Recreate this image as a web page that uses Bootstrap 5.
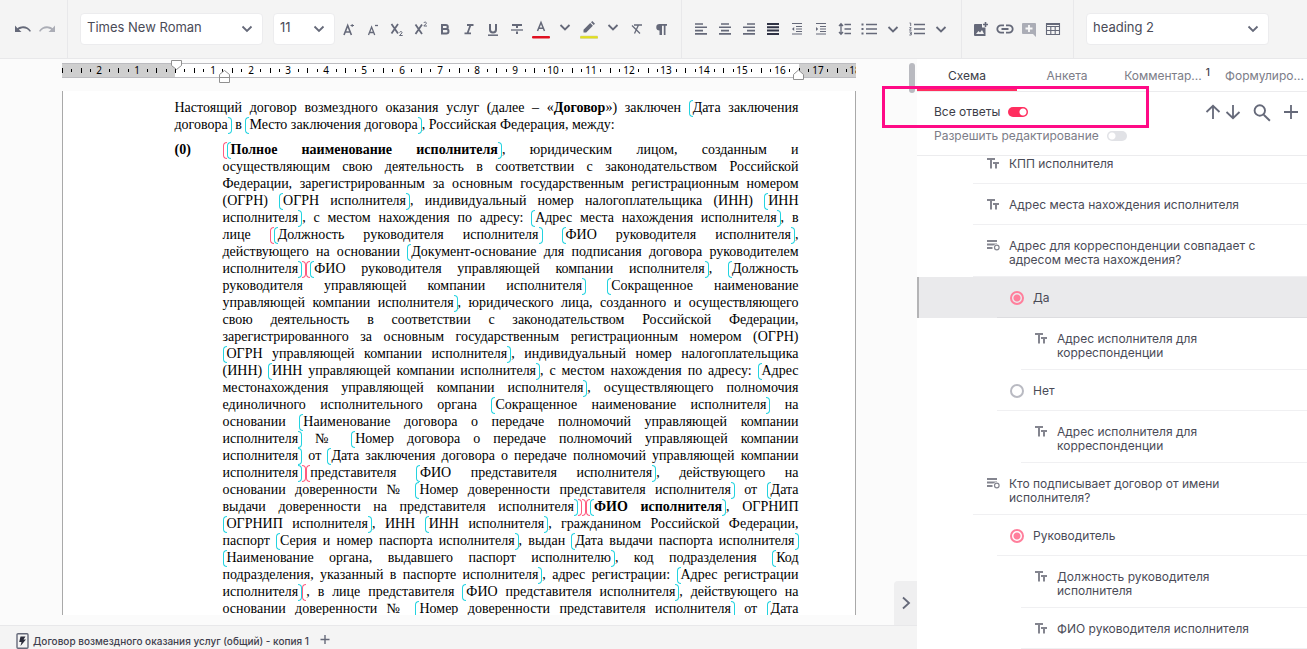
<!DOCTYPE html>
<html lang="ru">
<head>
<meta charset="utf-8">
<meta name="viewport" content="width=device-width, initial-scale=1">
<title>Договор возмездного оказания услуг</title>
<link href="https://cdn.jsdelivr.net/npm/bootstrap@5.3.0/dist/css/bootstrap.min.css" rel="stylesheet">
<style>
  body { font-family: Inter, "Noto Sans", sans-serif; font-size: 12px; color: #4a4b57; background: #fbfbfb; }
  button { border: 0; background: none; padding: 0; color: inherit; }
  svg { display: block; }

  /* toolbar */
  .toolbar { height: 59px; background: #f4f4f4; border-bottom: 1px solid #e8e8ea; padding-left: 3px; color: #656979; }
  .tool-group { padding: 0 8px; border-right: 1px solid #e8e8ea; }
  .tool-group + .tool-group { padding-left: 7px; }
  .tool-group.lists { padding-left: 12px; }
  .tool-group:last-child { border: 0; }
  .tool { width: 24px; height: 32px; display: flex; align-items: center; justify-content: center; }
  .tool:disabled { opacity: .5; }
  .pick { height: 32px; padding: 0 24px 2px 6px; font-size: 13px; color: #4a4b57; border: 1px solid #ececee; border-radius: 4px;
    background: #fff url("data:image/svg+xml,%3Csvg xmlns='http://www.w3.org/2000/svg' viewBox='0 0 12 8'%3E%3Cpath d='M1.5 1.5 6 6l4.5-4.5' fill='none' stroke='%23656979' stroke-width='1.8'/%3E%3C/svg%3E") no-repeat right 9px center / 12px 8px; }
  .pick-font { width: 183px; margin-right: 10px; }
  .pick-size { width: 62px; margin-right: 2px; }

  /* document */
  .editor { min-width: 0; }
  .doc-column { width: 794px; }
  .sheet { margin: 8px 0 10px; padding: 8px 56px 0 112px; border: solid #a9a9a9; border-width: 0 1px; background: #fff; color: #000;
    font: 14px/17px "Liberation Serif", "Times New Roman", serif; overflow: hidden; }
  .intro { text-align: justify; }
  .clause { margin-top: 8px; }
  .clause-no { width: 48px; flex: none; }
  .clause-text { min-width: 0; text-align: justify; text-align-last: justify; white-space: nowrap; }
  .fld::before, .fld::after, .cond::before, .cond.done::after { content: ""; display: inline-block; width: 4px; height: 17px; margin: -1px 0; vertical-align: -4px; border: 1px solid #22d3e0; }
  .fld::before, .cond::before { border-right: 0; border-radius: 4px 0 0 4px; }
  .fld::after, .cond.done::after { border-left: 0; border-radius: 0 4px 4px 0; }
  .cond::before, .cond.done::after { border-color: #ff5c80; }
  .doc-thumb { position: absolute; right: 2px; top: 4px; width: 6px; height: 30px; border-radius: 3px; background: #b9bac0; }
  .fold { position: absolute; right: 0; bottom: 0; width: 23px; height: 44px; background: #efeff0; border-radius: 4px 0 0 0; color: #656979; }
  .doc-tabs { height: 24px; border-top: 1px solid #e8e8ea; background: #f4f4f4; padding: 7px 0 0 16px; font-size: 10px; line-height: 16px; }
  .doc-tabs a { color: #3f404d; text-decoration: none; font-weight: 500; }

  /* side panel */
  .side { flex: 0 0 390px; min-width: 0; background: #fff; }
  .side-tabs { height: 33px; border-bottom: 1px solid #ececee; overflow: hidden; }
  .side-tabs button { flex: 0 0 100px; padding: 2px 0 0; color: #7c7d88; white-space: nowrap; }
  .side-tabs .active { color: #3c3d48; border-bottom: 3px solid #ff2e5f; padding-top: 4px; }
  .side-tabs sup { font-size: 10px; color: #3c3d48; top: -4px; margin-left: 4px; font-weight: 500; }
  .filters { height: 64px; padding: 8px 8px 0 17px; border-bottom: 1px solid #ececee; line-height: 24px; color: #7c7d88; }
  .filters .strong-label { color: #3c3d48; }
  .toggle { appearance: none; width: 20px; height: 10px; margin: 0 0 0 8px; border-radius: 5px;
    background: #e1e2e6 radial-gradient(circle at 5px 5px, #fff 3px, transparent 4px); }
  .toggle:checked { background: #ff2e5f radial-gradient(circle at 15px 5px, #fff 3px, transparent 4px); }
  .side-actions { color: #656979; }
  .callout { position: absolute; left: -35px; top: 27px; width: 267px; height: 42px; border: 3px solid #ff0a86; pointer-events: none; }

  .tree { flex: 1 1 0; min-height: 0; overflow: hidden; line-height: 14px; }
  .tree ul { margin: -13px 0 0; }
  .node { min-height: 41px; margin-left: 56px; padding: 14px 40px 9px 13px; border-bottom: 1px solid #f0f0f2; display: flex; }
  .node.l1 { margin-left: 80px; }
  .node.l2 { margin-left: 104px; }
  .node svg { flex: none; width: 14px; height: 14px; margin-right: 9px; color: #84858f; }
  .current { background: #eaeaec; box-shadow: inset 2px 0 #b4b4b6; }
  .current .node { border-color: #dddde0; }
  .choice { appearance: none; flex: none; width: 14px; height: 14px; margin: 0 9px 0 0; border: 2px solid #b9bac2; border-radius: 50%; }
  .choice:checked { border-color: #ff7f9c; background: radial-gradient(circle, #ff7f9c 3px, transparent 4px); }
</style>
</head>
<body class="vh-100 d-flex flex-column overflow-hidden">

<header class="toolbar d-flex flex-shrink-0">
  <div class="tool-group d-flex align-items-center">
    <button class="tool" aria-label="Отменить"><svg width="18" height="10" viewBox="0 0 18 10"><path d="M1 1.500V8h6.500L4.900 5.600C7.500 3.500 13 3.200 15.800 7.800L17 7C14 1.600 7.500 1 3.500 4.200Z" fill="currentColor"/></svg></button>
    <button class="tool" aria-label="Повторить" disabled><svg width="18" height="10" viewBox="0 0 18 10"><path d="M17 1.500V8h-6.500L13.100 5.600C10.500 3.500 5 3.200 2.200 7.800L1 7C4 1.600 10.500 1 14.500 4.200Z" fill="currentColor"/></svg></button>
  </div>
  <div class="tool-group lists d-flex align-items-center">
    <select class="form-select pick pick-font" aria-label="Шрифт"><option>Times New Roman</option></select>
    <select class="form-select pick pick-size" aria-label="Размер"><option>11</option></select>
    <button class="tool" aria-label="Увеличить"><svg width="16" height="16" viewBox="0 0 16 16" fill="none" stroke="currentColor" stroke-width="1.600"><path d="M3 14 6.700 4.500 10.400 14M4.200 11h5"/><path d="M9.500 4.500h3.500M11.200 3v3" stroke-width="1"/></svg></button>
    <button class="tool" aria-label="Уменьшить"><svg width="16" height="16" viewBox="0 0 16 16" fill="none" stroke="currentColor" stroke-width="1.300"><path d="M3.500 14 6.600 6 9.700 14M4.600 11.500h4"/><path d="M10 4.500h3" stroke-width="1.300"/></svg></button>
    <button class="tool" aria-label="Нижний индекс"><svg width="16" height="16" viewBox="0 0 16 16" fill="none" stroke="currentColor" stroke-width="1.800"><path d="M2.500 3 9 12.500M9 3 2.500 12.500"/><path d="M10.500 11.500c.5-1.500 3-1 2.500.4L10.500 14.500h3.200" stroke-width="1"/></svg></button>
    <button class="tool" aria-label="Верхний индекс"><svg width="16" height="16" viewBox="0 0 16 16" fill="none" stroke="currentColor" stroke-width="1.800"><path d="M2.500 3.500 9 13M9 3.500 2.500 13"/><path d="M10.800 2c.5-1.500 3-1 2.500.4L10.800 5h3.200" stroke-width="1"/></svg></button>
    <button class="tool" aria-label="Полужирный"><svg width="14" height="14" viewBox="0 0 14 14" fill="none" stroke="currentColor" stroke-width="2"><path d="M4 3h3.800a2 2 0 0 1 0 4H4zM4 7h4.300a2.200 2.200 0 0 1 0 4.400H4z"/></svg></button>
    <button class="tool" aria-label="Курсив"><svg width="14" height="14" viewBox="0 0 14 14" fill="none" stroke="currentColor" stroke-width="1.800"><path d="M5 3h6.500M2.500 11.300H9M8.500 3 5.500 11.300"/></svg></button>
    <button class="tool" aria-label="Подчёркнутый"><svg width="14" height="16" viewBox="0 0 14 16" fill="none" stroke="currentColor"><path d="M4 3v5.500a3 3 0 0 0 6 0V3" stroke-width="2"/><path d="M2 14.200h10" stroke-width="1.500"/></svg></button>
    <button class="tool" aria-label="Зачёркнутый"><svg width="14" height="14" viewBox="0 0 14 14" fill="none" stroke="currentColor"><path d="M2 3h10" stroke-width="2"/><path d="M7 3v3M7 9.500V12" stroke-width="2"/><path d="M1 8h12" stroke-width="1.300"/></svg></button>
    <button class="tool" aria-label="Цвет текста"><svg width="18" height="20" viewBox="0 0 18 20"><path d="M5.500 12 9 3.500 12.500 12M6.800 9.300h4.400" fill="none" stroke="currentColor" stroke-width="1.500"/><rect y="17" width="18" height="2.600" rx="1" fill="#e01020"/></svg></button>
    <button class="tool" aria-label="Выбрать цвет текста"><svg width="12" height="12" viewBox="0 0 12 12"><path d="M1.500 2 6 6.500 10.500 2" fill="none" stroke="currentColor" stroke-width="1.800"/></svg></button>
    <button class="tool" aria-label="Цвет выделения"><svg width="18" height="20" viewBox="0 0 18 20"><path d="M3.500 13.500v-2.700L10.200 4l2.700 2.700-6.700 6.800zM11 3.200l1.300-1.200 2.700 2.700-1.300 1.200z" fill="currentColor"/><rect y="17" width="18" height="2.600" rx="1" fill="#e3e01a" stroke="#c9c8a0" stroke-width=".5"/></svg></button>
    <button class="tool" aria-label="Выбрать цвет выделения"><svg width="12" height="12" viewBox="0 0 12 12"><path d="M1.500 2 6 6.500 10.500 2" fill="none" stroke="currentColor" stroke-width="1.800"/></svg></button>
    <button class="tool" aria-label="Очистить формат"><svg width="14" height="14" viewBox="0 0 14 14" fill="none" stroke="currentColor" stroke-width="1.300"><path d="M4 3h8M8.500 3 4.500 11.500M2 3.500l8 8"/></svg></button>
    <button class="tool" aria-label="Непечатаемые знаки"><svg width="14" height="14" viewBox="0 0 14 14"><path d="M5.500 8.500a3.200 3.200 0 0 1 0-6.500H13v1.700h-1.500V13H9.800V3.700H8V13H5.500z" fill="currentColor"/></svg></button>
  </div>
  <div class="tool-group d-flex align-items-center">
    <button class="tool" aria-label="По левому краю"><svg width="12" height="12" viewBox="0 0 12 12" stroke="currentColor" stroke-width="1.600"><path d="M0 1h8M0 4.300h12M0 7.600h8M0 10.900h12"/></svg></button>
    <button class="tool" aria-label="По центру"><svg width="12" height="12" viewBox="0 0 12 12" stroke="currentColor" stroke-width="1.600"><path d="M2 1h8M0 4.300h12M2 7.600h8M0 10.900h12"/></svg></button>
    <button class="tool" aria-label="По правому краю"><svg width="12" height="12" viewBox="0 0 12 12" stroke="currentColor" stroke-width="1.600"><path d="M4 1h8M0 4.300h12M4 7.600h8M0 10.900h12"/></svg></button>
    <button class="tool" aria-label="По ширине"><svg width="12" height="12" viewBox="0 0 12 12" stroke="#2f3244" stroke-width="2"><path d="M0 1h12M0 4.300h12M0 7.600h12M0 10.900h12"/></svg></button>
    <button class="tool" aria-label="Уменьшить отступ"><svg width="12" height="14" viewBox="0 0 12 14" stroke="currentColor" stroke-width="1.200"><path d="M1 1.500h10M5 4.500h6M5 7h6M5 9.500h6M1 12h10"/><path d="M3.200 5v4L1 7z" fill="currentColor" stroke="none"/></svg></button>
    <button class="tool" aria-label="Увеличить отступ"><svg width="12" height="14" viewBox="0 0 12 14" stroke="currentColor" stroke-width="1.200"><path d="M1 1.500h10M5 4.500h6M5 7h6M5 9.500h6M1 12h10"/><path d="M1 5v4l2.200-2z" fill="currentColor" stroke="none"/></svg></button>
    <button class="tool" aria-label="Межстрочный интервал"><svg width="14" height="14" viewBox="0 0 14 14" fill="none" stroke="currentColor" stroke-width="1.500"><path d="M6.500 2.500H13M6.500 7H13M6.500 11.500H13M3 2v10M1 4l2-2.300L5 4M1 10l2 2.300L5 10" stroke-width="1.300"/></svg></button>
    <button class="tool" aria-label="Маркированный список"><svg width="16" height="14" viewBox="0 0 16 14" stroke="currentColor" stroke-width="1.400"><path d="M5 2.500h11M5 7h11M5 11.500h11"/><path d="M.5 2.500h2M.5 7h2M.5 11.500h2" stroke-width="2.200"/></svg></button>
    <button class="tool" aria-label="Вид маркера"><svg width="12" height="12" viewBox="0 0 12 12"><path d="M1.500 4 6 8.500 10.500 4" fill="none" stroke="currentColor" stroke-width="1.800"/></svg></button>
    <button class="tool" aria-label="Нумерованный список"><svg width="16" height="14" viewBox="0 0 16 14" fill="none" stroke="currentColor" stroke-width="1.400"><path d="M5 2.500h11M5 7h11M5 11.500h11"/><path d="M.5 1h1.200v3M.3 5.700h1.900L.5 8.200h2M.3 10h2v3H.3M1 11.500h1.200" stroke-width=".9"/></svg></button>
    <button class="tool" aria-label="Вид нумерации"><svg width="12" height="12" viewBox="0 0 12 12"><path d="M1.500 4 6 8.500 10.500 4" fill="none" stroke="currentColor" stroke-width="1.800"/></svg></button>
  </div>
  <div class="tool-group d-flex align-items-center">
    <button class="tool" aria-label="Изображение"><svg width="16" height="16" viewBox="0 0 16 16"><path d="M2 3h7v3.500h3.500V15H2a1 1 0 0 1-1-1V4a1 1 0 0 1 1-1zm1 10h8l-2-4-2 2.500L5.500 10z" fill="currentColor" fill-rule="evenodd"/><path d="M12.500 1v5M10 3.500h5" stroke="currentColor" stroke-width="1.600"/></svg></button>
    <button class="tool" aria-label="Ссылка"><svg width="18" height="10" viewBox="0 0 18 10" fill="none" stroke="currentColor" stroke-width="1.800"><path d="M8 1.300H5a3.700 3.700 0 0 0 0 7.400h3M10 1.300h3a3.700 3.700 0 0 1 0 7.400h-3M5.500 5h7"/></svg></button>
    <button class="tool" aria-label="Комментарий" disabled><svg width="16" height="16" viewBox="0 0 16 16"><path d="M2 2h12a1 1 0 0 1 1 1v13l-3-3H2a1 1 0 0 1-1-1V3a1 1 0 0 1 1-1z" fill="currentColor"/><path d="M8 4v7M4.500 7.500h7" stroke="#fff" stroke-width="1.800"/></svg></button>
    <button class="tool" aria-label="Таблица"><svg width="16" height="14" viewBox="0 0 16 14" fill="none" stroke="currentColor" stroke-width="1.100"><path d="M1 1.500h14M1 4.500h14M1 8.500h14M1 12.500h14M1.500 1v12M5.800 4v9M10.200 4v9M14.500 1v12"/><path d="M1 2h14" stroke-width="2"/></svg></button>
  </div>
  <div class="tool-group lists d-flex align-items-center">
    <select class="form-select pick pick-font" aria-label="Стиль"><option>heading 2</option></select>
  </div>
</header>

<div class="d-flex flex-grow-1 overflow-hidden">
  <main class="editor d-flex flex-column flex-grow-1">
    <div class="position-relative d-flex flex-grow-1 overflow-hidden justify-content-center">
      <div class="doc-column d-flex flex-column">
        <svg id="ruler" class="flex-shrink-0" width="794" height="24" viewBox="0 0 794 24" font-family="Noto Sans, sans-serif" font-size="10" text-anchor="middle">
          <rect x="0" y="4" width="794" height="15" fill="#bcbcc0"/>
          <rect x="0" y="5" width="794" height="13" fill="#cfcfcf"/>
          <rect x="113" y="5" width="624" height="13" fill="#fff"/>
          <g id="marks"></g>
          <g fill="#fff" stroke="#909090">
            <path d="M109.500 1.500h10v5l-5 4-5-4z"/>
            <path d="M157.500 23.500v-8l5-4 5 4v8zM157.500 18.500h10"/>
            <path d="M731.500 20.500v-5l5-4.500 5 4.500v5z"/>
          </g>
        </svg>
        <article class="sheet flex-grow-1">
          <div class="intro">Настоящий договор возмездного оказания услуг (далее – «<b>Договор</b>») заключен <span class="fld">Дата заключения договора</span> в <span class="fld">Место заключения договора</span>, Российская Федерация, между:</div>
          <div class="clause d-flex"><b class="clause-no">(0)</b>
          <div class="clause-text flex-grow-1"><span class="cond done"><b class="fld">Полное наименование исполнителя</b>, юридическим лицом, созданным и<br>
осуществляющим свою деятельность в соответствии с законодательством Российской<br>
Федерации, зарегистрированным за основным государственным регистрационным номером<br>
(ОГРН) <span class="fld">ОГРН исполнителя</span>, индивидуальный номер налогоплательщика (ИНН) <span class="fld">ИНН<br>
исполнителя</span>, с местом нахождения по адресу: <span class="fld">Адрес места нахождения исполнителя</span>, в<br>
лице <span class="cond done"><span class="fld">Должность руководителя исполнителя</span> <span class="fld">ФИО руководителя исполнителя</span>,<br>
действующего на основании <span class="fld">Документ-основание для подписания договора руководителем<br>
исполнителя</span></span><span class="cond done"><span class="fld">ФИО руководителя управляющей компании исполнителя</span>, <span class="fld">Должность<br>
руководителя управляющей компании исполнителя</span> <span class="fld">Сокращенное наименование<br>
управляющей компании исполнителя</span>, юридического лица, созданного и осуществляющего<br>
свою деятельность в соответствии с законодательством Российской Федерации,<br>
зарегистрированного за основным государственным регистрационным номером (ОГРН)<br>
<span class="fld">ОГРН управляющей компании исполнителя</span>, индивидуальный номер налогоплательщика<br>
(ИНН) <span class="fld">ИНН управляющей компании исполнителя</span>, с местом нахождения по адресу: <span class="fld">Адрес<br>
местонахождения управляющей компании исполнителя</span>, осуществляющего полномочия<br>
единоличного исполнительного органа <span class="fld">Сокращенное наименование исполнителя</span> на<br>
основании <span class="fld">Наименование договора о передаче полномочий управляющей компании<br>
исполнителя</span> № <span class="fld">Номер договора о передаче полномочий управляющей компании<br>
исполнителя</span> от <span class="fld">Дата заключения договора о передаче полномочий управляющей компании<br>
исполнителя</span></span><span class="cond done">представителя <span class="fld">ФИО представителя исполнителя</span>, действующего на<br>
основании доверенности № <span class="fld">Номер доверенности представителя исполнителя</span> от <span class="fld">Дата<br>
выдачи доверенности на представителя исполнителя</span></span></span><span class="cond"><b class="fld">ФИО исполнителя</b>, ОГРНИП<br>
<span class="fld">ОГРНИП исполнителя</span>, ИНН <span class="fld">ИНН исполнителя</span>, гражданином Российской Федерации,<br>
паспорт <span class="fld">Серия и номер паспорта исполнителя</span>, выдан <span class="fld">Дата выдачи паспорта исполнителя</span><br>
<span class="fld">Наименование органа, выдавшего паспорт исполнителю</span>, код подразделения <span class="fld">Код<br>
подразделения, указанный в паспорте исполнителя</span>, адрес регистрации: <span class="fld">Адрес регистрации<br>
исполнителя</span><span class="cond">, в лице представителя <span class="fld">ФИО представителя исполнителя</span>, действующего на<br>
основании доверенности № <span class="fld">Номер доверенности представителя исполнителя</span> от <span class="fld">Дата<br></span></span></span></div></div>
        </article>
      </div>
      <div class="doc-thumb"></div>
      <button class="fold d-flex align-items-center justify-content-center" aria-label="Свернуть панель"><svg width="10" height="14" viewBox="0 0 10 14"><path d="M2 1.500 8 7l-6 5.500" fill="none" stroke="currentColor" stroke-width="1.800"/></svg></button>
    </div>
    <footer class="doc-tabs d-flex flex-shrink-0">
      <svg width="13" height="16" viewBox="0 0 13 16" class="flex-shrink-0 me-1"><rect x="1" y=".7" width="11" height="14.600" rx="1" fill="none" stroke="#656979" stroke-width="1.400"/><path d="M4.500 3.500h5L7.500 6.500h2.500L4.500 13l1-4H3.200z" fill="#2b2c3a"/></svg>
      <a href="#">Договор возмездного оказания услуг (общий) - копия 1</a>
      <button class="ms-2 align-self-start" aria-label="Добавить"><svg width="16" height="14" viewBox="0 0 16 14"><path d="M8 2v9M3.500 6.500h9" stroke="#656979" stroke-width="1.400"/></svg></button>
    </footer>
  </main>

  <aside class="side d-flex flex-column position-relative">
    <nav class="side-tabs d-flex flex-shrink-0">
      <button class="active">Схема</button>
      <button>Анкета</button>
      <button>Комментар...<sup>1</sup></button>
      <button class="text-start ps-2">Формулиро...</button>
    </nav>
    <div class="filters d-flex flex-shrink-0 justify-content-between">
      <div>
        <div class="d-flex align-items-center"><label for="all" class="strong-label">Все ответы</label><input class="toggle" type="checkbox" role="switch" id="all" checked></div>
        <div class="d-flex align-items-center"><label for="edit">Разрешить редактирование</label><input class="toggle" type="checkbox" role="switch" id="edit"></div>
      </div>
      <div class="side-actions d-flex align-items-start pt-1 gap-1">
        <button aria-label="Вверх"><svg width="16" height="16" viewBox="0 0 16 16" fill="none" stroke="currentColor" stroke-width="1.800"><path d="M8 15V2M1.500 8 8 1.800 14.500 8"/></svg></button>
        <button aria-label="Вниз"><svg width="16" height="16" viewBox="0 0 16 16" fill="none" stroke="currentColor" stroke-width="1.800"><path d="M8 1v13M1.500 8 8 14.200 14.500 8"/></svg></button>
        <button class="ms-2" aria-label="Поиск"><svg width="18" height="18" viewBox="0 0 18 18" fill="none" stroke="currentColor" stroke-width="1.900"><circle cx="6.800" cy="6.500" r="5.200"/><path d="m10.700 10.700 6.200 6.100"/></svg></button>
        <button class="ms-2" aria-label="Добавить"><svg width="16" height="16" viewBox="0 0 16 16"><path d="M8 1v14M1 8h14" stroke="currentColor" stroke-width="1.800"/></svg></button>
      </div>
    </div>
    <div class="tree">
      <ul class="list-unstyled">
        <li><div class="node"><svg><use href="#tt"/></svg>КПП исполнителя</div></li>
        <li><div class="node"><svg><use href="#tt"/></svg>Адрес места нахождения исполнителя</div></li>
        <li><div class="node"><svg><use href="#ask"/></svg>Адрес для корреспонденции совпадает с адресом места нахождения?</div></li>
        <li class="current"><div class="node l1"><input class="choice" type="radio" name="same" id="yes" checked><label for="yes">Да</label></div></li>
        <li><div class="node l2"><svg><use href="#tt"/></svg>Адрес исполнителя для корреспонденции</div></li>
        <li><div class="node l1"><input class="choice" type="radio" name="same" id="no"><label for="no">Нет</label></div></li>
        <li><div class="node l2"><svg><use href="#tt"/></svg>Адрес исполнителя для корреспонденции</div></li>
        <li><div class="node"><svg><use href="#ask"/></svg>Кто подписывает договор от имени исполнителя?</div></li>
        <li><div class="node l1"><input class="choice" type="radio" name="signer" id="head" checked><label for="head">Руководитель</label></div></li>
        <li><div class="node l2"><svg><use href="#tt"/></svg>Должность руководителя исполнителя</div></li>
        <li><div class="node l2"><svg><use href="#tt"/></svg>ФИО руководителя исполнителя</div></li>
      </ul>
    </div>
    <div class="callout"></div>
  </aside>
</div>

<svg class="d-none">
  <symbol id="tt" viewBox="0 0 14 14"><path d="M1 2h8M5 2v9.500M7 6h6M10 6v5.500" fill="none" stroke="currentColor" stroke-width="2"/></symbol>
  <symbol id="ask" viewBox="0 0 14 14"><path d="M1 2h10M1 5.500h10M1 9h5.500" stroke="currentColor" stroke-width="1.800"/><circle cx="10.800" cy="8.500" r="3.600" fill="#fff"/><circle cx="10.800" cy="8.500" r="2.300" fill="none" stroke="currentColor" stroke-width="1.200"/></symbol>
</svg>

<script src="https://cdn.jsdelivr.net/npm/bootstrap@5.3.0/dist/js/bootstrap.bundle.min.js"></script>
<script>
  // Ruler: one centimetre is 37.8 px, zero lies at the left margin of the text.
  const cm = 37.8, zero = 113;
  let out = '';
  for (let q = -12; q <= 72; q++) {
    const x = Math.round(zero + q * cm / 4);
    if (q % 4 === 0 && q !== 0 && q !== -12) out += `<text x="${x}" y="15">${Math.abs(q / 4)}</text>`;
    else { const h = q % 2 === 0 ? 5 : 3; out += `<rect x="${x}" y="${q % 2 === 0 ? 9 : 10}" width="1" height="${h}"/>`; }
  }
  document.getElementById('marks').innerHTML = out;
</script>
</body>
</html>
